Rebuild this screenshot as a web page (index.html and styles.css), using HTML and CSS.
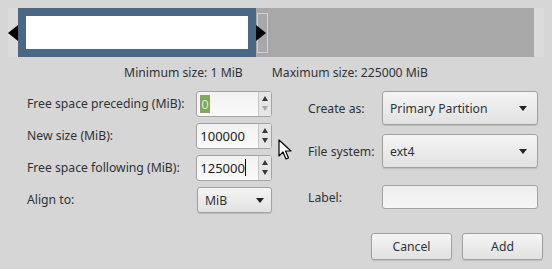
FILE: index.html
```html
<!DOCTYPE html>
<html lang="en">
<head>
  <meta charset="UTF-8">
  <title>Create new Partition</title>
  <link rel="stylesheet" href="styles.css">
</head>
<body>
  <div class="bar">
    <div class="part">
      <span class="grip grip-left"></span>
      <span class="grip grip-right"></span>
    </div>
    <div class="free">
      <div class="free-mark"></div>
    </div>
  </div>

  <div class="limits">
    <span>Minimum size: 1 MiB</span>
    <span>Maximum size: 225000 MiB</span>
  </div>

  <div class="form">
    <div class="col col-left">
      <div class="row">
        <label>Free space preceding (MiB):</label>
        <div class="spin">
          <div class="spin-text"><span class="sel">0</span></div>
          <div class="spin-btns"><span class="up"></span><span class="down off"></span></div>
        </div>
      </div>
      <div class="row">
        <label>New size (MiB):</label>
        <div class="spin">
          <div class="spin-text">100000</div>
          <div class="spin-btns"><span class="up"></span><span class="down"></span></div>
        </div>
      </div>
      <div class="row">
        <label>Free space following (MiB):</label>
        <div class="spin">
          <div class="spin-text">125000<span class="caret"></span></div>
          <div class="spin-btns"><span class="up"></span><span class="down"></span></div>
        </div>
      </div>
      <div class="row">
        <label>Align to:</label>
        <div class="combo combo-small">MiB<span class="drop"></span></div>
      </div>
    </div>

    <div class="col col-right">
      <div class="row row-combo">
        <label>Create as:</label>
        <div class="combo">Primary Partition<span class="drop"></span></div>
      </div>
      <div class="row row-combo">
        <label>File system:</label>
        <div class="combo">ext4<span class="drop"></span></div>
      </div>
      <div class="row row-label">
        <label>Label:</label>
        <div class="field"></div>
      </div>
    </div>
  </div>

  <div class="buttons">
    <button>Cancel</button>
    <button>Add</button>
  </div>

  <svg class="pointer" width="14" height="22" viewBox="0 0 14 22">
    <path d="M1 1 L1 17 L5 13 L8 20 L10.5 19 L7.5 12 L13 12 Z" fill="#fff" stroke="#000" stroke-width="1.2" stroke-linejoin="round"/>
  </svg>
</body>
</html>
```

FILE: styles.css
```css
body {
  margin: 0;
  width: 552px;
  height: 269px;
  background: #d6d6d6;
  font-family: "Noto Sans", "Open Sans", sans-serif;
  font-size: 12.2px;
  color: #2f3236;
  position: relative;
  overflow: hidden;
}
.bar {
  display: flex;
  height: 49px;
  margin: 8px 8px 0;
  padding: 0 10px;
  background: #dbdbdb;
}
.part {
  width: 222px;
  border: 8px solid #4a6883;
  background: #fff;
  position: relative;
}
.grip {
  position: absolute;
  top: 9px;
  width: 0;
  height: 0;
  border-top: 8px solid transparent;
  border-bottom: 8px solid transparent;
}
.grip-left {
  left: -18px;
  border-right: 10px solid #000;
}
.grip-right {
  right: -18px;
  border-left: 10px solid #000;
}
.free {
  flex: 1;
  background: #a8a8a8;
}
.free-mark {
  width: 9px;
  height: 38px;
  margin: 5px 0 0 1px;
  border: 1px solid #d2d2d2;
}
.limits {
  display: flex;
  justify-content: center;
  gap: 29px;
  margin-top: 7px;
  height: 18px;
  line-height: 18px;
}
.form {
  display: flex;
  margin-top: 9px;
  padding-left: 27px;
}
.col {
  display: flex;
  flex-direction: column;
}
.col-left {
  gap: 7px;
  width: 245px;
}
.col-right {
  margin-left: 36px;
}
.row {
  display: flex;
  align-items: center;
  height: 25px;
}
.col-left label {
  width: 170px;
}
.col-right label {
  width: 74px;
}
.row-combo {
  height: 34px;
  margin-bottom: 9px;
}
.row-label {
  height: 24px;
  margin-top: 8px;
}
.spin {
  display: flex;
  width: 74px;
  height: 24px;
  border: 1px solid #a3a3a3;
  border-radius: 3px;
  background: linear-gradient(#f2f2f2, #fafafa);
  box-sizing: content-box;
}
.spin-text {
  flex: 1;
  display: flex;
  align-items: center;
  padding-left: 3px;
  border-right: 1px solid #c4c4c4;
  color: #222;
  font-size: 13px;
}
.sel {
  background: #82a562;
  color: #d9ebb5;
  padding: 0 1px;
  line-height: 18px;
}
.caret {
  display: inline-block;
  width: 1px;
  height: 17px;
  background: #000;
}
.spin-btns {
  width: 12px;
  display: flex;
  flex-direction: column;
  align-items: center;
  justify-content: center;
  gap: 5px;
  background: #e6e6e6;
}
.up, .down {
  width: 0;
  height: 0;
  border-left: 3px solid transparent;
  border-right: 3px solid transparent;
}
.up {
  border-bottom: 5px solid #3a3a3a;
}
.down {
  border-top: 5px solid #3a3a3a;
}
.down.off {
  border-top-color: #a9a9a9;
}
.combo {
  display: flex;
  align-items: center;
  justify-content: space-between;
  width: 156px;
  height: 34px;
  padding: 0 10px 0 7px;
  box-sizing: border-box;
  border: 1px solid #a0a0a0;
  border-radius: 3px;
  background: linear-gradient(#f5f5f5, #e1e1e1);
  box-shadow: 0 1px 1px rgba(0, 0, 0, 0.12);
}
.combo-small {
  width: 75px;
  height: 26px;
  padding: 0 7px;
  margin-top: 1px;
}
.drop {
  width: 0;
  height: 0;
  border-left: 4px solid transparent;
  border-right: 4px solid transparent;
  border-top: 5px solid #222;
}
.field {
  width: 156px;
  height: 24px;
  box-sizing: border-box;
  border: 1px solid #a3a3a3;
  border-radius: 3px;
  background: linear-gradient(#ededed, #f6f6f6);
}
.buttons {
  position: absolute;
  right: 9px;
  top: 233px;
  display: flex;
  gap: 10px;
}
.buttons button {
  width: 81px;
  height: 27px;
  font: inherit;
  color: #2f3236;
  border: 1px solid #a0a0a0;
  border-radius: 3px;
  background: linear-gradient(#f5f5f5, #e1e1e1);
  box-shadow: 0 1px 1px rgba(0, 0, 0, 0.12);
}
.pointer {
  position: absolute;
  left: 278px;
  top: 139px;
}
```
